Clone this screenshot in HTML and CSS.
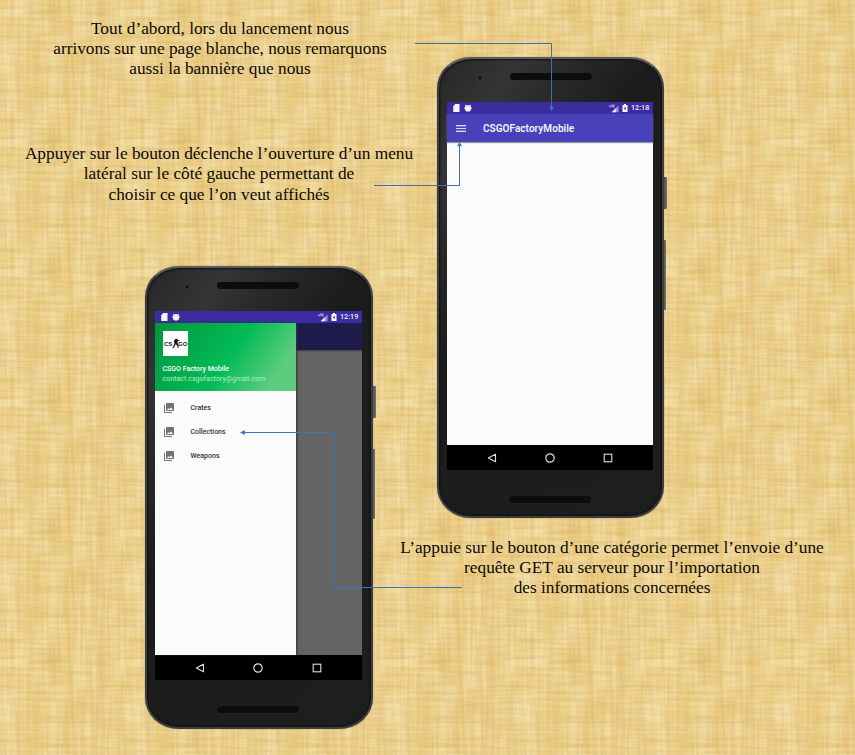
FILE: index.html
```html
<!DOCTYPE html>
<html lang="fr">
<head>
<meta charset="utf-8">
<title>CSGO Factory Mobile</title>
<link rel="stylesheet" href="styles.css">
</head>
<body>
<svg class="defs" width="0" height="0" aria-hidden="true">
  <symbol id="sd" viewBox="0 0 7 8"><path d="M2.3 0H6.5V8H.2V2.2z" fill="#f4f3fc"/></symbol>
  <symbol id="debug" viewBox="0 0 8 8"><path d="M1.200 .5 2.300 1.200H5.700L6.800 .5 6.600 2.200Q7.200 2.500 7 3.500H7.600V5H7Q6.900 7.300 5.500 7.500H2.500Q1.100 7.300 1 5H.4V3.500H1Q.8 2.500 1.400 2.200z" fill="#f4f3fc"/><circle cx="2.8" cy="3" r=".4" fill="#8a82cf"/><circle cx="5.2" cy="3" r=".4" fill="#8a82cf"/></symbol>
  <symbol id="signal" viewBox="0 0 10 9"><path d="M2.5 8.200 9.500 1.500V8.200z" fill="#9b94dc"/><path d="M2.800 8.200 6.800 4.200V8.200z" fill="#f4f3fc"/><path d="M.8 1V2.900H1.900M2.100 1.100H4M3 1.100V3.300M5.700 1.100H4.400V3.100H5.700" stroke="#e6e3fa" stroke-width=".7" fill="none"/></symbol>
  <symbol id="battery" viewBox="0 0 6 8"><path d="M2 0H4V1H5.5V8H.5V1H2z" fill="#fff"/><path d="M3.4 2 1.8 4.7H2.8V6.7L4.3 4H3.4z" fill="#3c2fa0"/></symbol>
  <symbol id="gallery" viewBox="0 0 24 24"><path d="M22 16V4c0-1.100-.9-2-2-2H8c-1.100 0-2 .9-2 2v12c0 1.100.9 2 2 2h12c1.100 0 2-.9 2-2zm-11-4 2.030 2.710L16 11l4 5H8l3-4zM2 6v14c0 1.100.9 2 2 2h14v-2H4V6H2z" fill="#727272"/></symbol>
  <symbol id="back" viewBox="0 0 10 10"><path d="M8.500 1.200V8.800L1.300 5z" fill="none" stroke="#dedede" stroke-width="1.100" stroke-linejoin="round"/></symbol>
  <symbol id="home" viewBox="0 0 10 10"><circle cx="5" cy="5" r="4.200" fill="none" stroke="#dedede" stroke-width="1.200"/></symbol>
  <symbol id="recent" viewBox="0 0 10 10"><rect x="1.200" y="1.200" width="7.600" height="7.600" fill="none" stroke="#dedede" stroke-width="1.100"/></symbol>
</svg>
<main class="slide">
  <svg class="papyrus" width="855" height="755" aria-hidden="true">
    <defs>
      <filter id="weft" x="0" y="0" width="100%" height="100%" color-interpolation-filters="sRGB">
        <feTurbulence type="fractalNoise" baseFrequency=".0231 .3" numOctaves="2" seed="7" stitchTiles="stitch"/>
        <feColorMatrix values="0 0 0 0 .78  0 0 0 0 .62  0 0 0 0 .3  .6 0 0 0 -.2"/>
      </filter>
      <filter id="warp" x="0" y="0" width="100%" height="100%" color-interpolation-filters="sRGB">
        <feTurbulence type="fractalNoise" baseFrequency=".3 .0154" numOctaves="2" seed="12" stitchTiles="stitch"/>
        <feColorMatrix values="0 0 0 0 .82  0 0 0 0 .62  0 0 0 0 .36  .6 0 0 0 -.2"/>
      </filter>
      <filter id="cloud" x="0" y="0" width="100%" height="100%" color-interpolation-filters="sRGB">
        <feTurbulence type="fractalNoise" baseFrequency=".0385 .0385" numOctaves="2" seed="4" stitchTiles="stitch"/>
        <feColorMatrix values="0 0 0 0 .92  0 0 0 0 .79  0 0 0 0 .44  1 0 0 0 -.18"/>
      </filter>
      <pattern id="tile" x="74" y="48" width="130" height="130" patternUnits="userSpaceOnUse">
        <rect width="130" height="130" fill="#f5e3ae"/>
        <rect width="130" height="130" filter="url(#cloud)"/>
        <rect width="130" height="130" filter="url(#weft)"/>
        <rect width="130" height="130" filter="url(#warp)"/>
        <rect x="22" width="9" height="130" fill="#d8a765" opacity=".16"/>
        <rect x="120" width="10" height="130" fill="#dba94a" opacity=".14"/>
      </pattern>
    </defs>
    <rect width="855" height="755" fill="url(#tile)"/>
  </svg>

  <p class="caption launch"><span>Tout d’abord, lors du lancement nous</span><span>arrivons sur une page blanche, nous remarquons</span><span>aussi la bannière que nous</span></p>
  <p class="caption drawer-note"><span>Appuyer sur le bouton déclenche l’ouverture d’un menu</span><span>latéral sur le côté gauche permettant de</span><span>choisir ce que l’on veut affichés</span></p>
  <p class="caption request"><span>L’appuie sur le bouton d’une catégorie permet l’envoie d’une</span><span>requête GET au serveur pour l’importation</span><span>des informations concernées</span></p>

  <section class="phone phone-home">
    <i class="key power"></i><i class="key volume"></i>
    <div class="shell">
      <div class="top"><i class="camera"></i><i class="speaker"></i></div>
      <div class="screen">
        <div class="status"><svg class="sd"><use href="#sd"/></svg><svg class="debug"><use href="#debug"/></svg><svg class="signal"><use href="#signal"/></svg><svg class="battery"><use href="#battery"/></svg><time>12:18</time></div>
        <header class="appbar"><i class="burger"></i><h1>CSGOFactoryMobile</h1></header>
        <div class="content"></div>
        <nav class="softkeys"><svg><use href="#back"/></svg><svg><use href="#home"/></svg><svg><use href="#recent"/></svg></nav>
      </div>
      <div class="bottom"><i class="speaker"></i></div>
    </div>
  </section>

  <section class="phone phone-menu">
    <i class="key power"></i><i class="key volume"></i>
    <div class="shell">
      <div class="top"><i class="camera"></i><i class="speaker"></i></div>
      <div class="screen">
        <div class="status"><svg class="sd"><use href="#sd"/></svg><svg class="debug"><use href="#debug"/></svg><svg class="signal"><use href="#signal"/></svg><svg class="battery"><use href="#battery"/></svg><time>12:19</time></div>
        <div class="body">
          <aside class="drawer">
            <header class="account">
              <svg class="logo" viewBox="0 0 25 25"><rect width="25" height="25" fill="#fff"/><text x=".9" y="15.300" textLength="8.500" lengthAdjust="spacingAndGlyphs">CS</text><text x="15" y="15.300" textLength="9.300" lengthAdjust="spacingAndGlyphs">GO</text><path d="M12.500 7.800h1.800l.3 1.300 2.200-.2v.7l-2 .5-.3 2.500.9 1.400.4 2.700h-1l-.8-2.400-1.400-1.100-.8 1.800-1.300 2.300h-1l1.500-3 .5-2.500-.7-1.200.8-1.500z" fill="#181818"/><path d="M9.700 16.800 12 12.500" stroke="#333" stroke-width=".7"/></svg>
              <strong>CSGO Factory Mobile</strong>
              <span>contact.csgofactory@gmail.com</span>
            </header>
            <ul class="menu">
              <li><svg><use href="#gallery"/></svg>Crates</li>
              <li><svg><use href="#gallery"/></svg>Collections</li>
              <li><svg><use href="#gallery"/></svg>Weapons</li>
            </ul>
          </aside>
          <div class="dimmed"></div>
        </div>
        <nav class="softkeys"><svg><use href="#back"/></svg><svg><use href="#home"/></svg><svg><use href="#recent"/></svg></nav>
      </div>
      <div class="bottom"><i class="speaker"></i></div>
    </div>
  </section>

  <svg class="connectors" width="855" height="755" aria-hidden="true">
    <g fill="none">
      <path d="M415 43.500H551.500V108" stroke="#416fa6"/>
      <path d="M374 185.500H459.500V146" stroke="#416fa6"/>
      <path d="M462 587.500H334.500V432.500H244" stroke="#3c73bb"/>
    </g>
    <path d="M549.200 106.800h4.600L551.500 111z" fill="#3c78be"/>
    <path d="M457 146.300h5L459.500 142z" fill="#3c78be"/>
    <path d="M244.800 430v5L240 432.500z" fill="#3c73bb"/>
  </svg>
</main>
</body>
</html>
```
FILE: styles.css
```css
* { box-sizing: border-box; }
body { margin: 0; }
i { display: block; }
svg { display: block; }
.defs { position: absolute; }
.slide { position: relative; width: 855px; height: 755px; overflow: hidden; background: #ead08c; }
.papyrus, .connectors { position: absolute; inset: 0; }
.connectors { z-index: 3; }

.caption { position: absolute; margin: 0; display: flex; flex-direction: column; align-items: center; font: 17.300px/20.200px "Liberation Serif", "Times New Roman", serif; color: #0b0a06; white-space: nowrap; }
.launch { left: 20px; top: 19px; width: 400px; }
.drawer-note { left: 19px; top: 144px; width: 400px; line-height: 20.400px; }
.request { left: 392px; top: 538px; width: 440px; }

.phone { position: absolute; font-family: Roboto, sans-serif; }
.phone-home { left: 437px; top: 57px; width: 227px; height: 461px; }
.phone-menu { left: 145px; top: 266px; width: 228px; height: 463px; }
.key { position: absolute; right: -2.500px; width: 5px; background: linear-gradient(90deg, #333, #77736c); border-radius: 1px; }
.power { top: 120px; height: 32px; }
.volume { top: 183px; height: 70px; right: -1.500px; }
.shell { position: relative; height: 100%; display: flex; flex-direction: column; padding: 0 9px 0 8px; border: 2px solid #3e3e40; border-top-color: #5c5c5c; border-radius: 34px / 31px; background: linear-gradient(125deg, #262626 0, #353535 15%, #2b2b2b 23%, #1c1c1c 40%, #1e1e1e 100%); box-shadow: inset 0 0 2px 1px #111, 0 0 1px #555; }
.top { flex: 0 0 43px; display: flex; align-items: flex-start; padding: 14px 0 0 29px; }
.phone-home .top { padding-left: 30px; }
.phone-menu .shell { padding-left: 7.500px; }
.camera { width: 6px; height: 6px; margin-top: 2px; border: 1px solid #453f40; border-radius: 50%; background: #171116; }
.speaker { width: 82px; height: 7px; border-radius: 4px; background: radial-gradient(circle, #080808 .6px, #1a1a1a 1px) 0 0 / 2px 2px; box-shadow: 0 0 1px #3a3a3a; }
.top .speaker { margin-left: 27px; }
.screen { flex: 1; min-height: 0; display: flex; flex-direction: column; }
.bottom { flex: 0 0 46px; display: flex; justify-content: center; padding-top: 26px; }
.phone-menu .bottom { flex-basis: 47px; }

.status { flex: 0 0 12px; display: flex; align-items: center; padding: 0 4px 0 6px; background: #3b2d9f; color: #efedfb; }
.sd { width: 7px; height: 8px; }
.debug { width: 8px; height: 8px; margin-left: 4px; }
.signal { width: 10px; height: 9px; margin-left: auto; }
.battery { width: 6px; height: 8px; margin: 0 3px 0 3px; }
.status time { font-size: 7.200px; line-height: 12px; font-weight: 500; width: 18px; }
.appbar { flex: 0 0 28px; display: flex; align-items: center; padding-left: 9px; background: #4841b9; color: #f3f2fb; box-shadow: 0 1px 1px #999; z-index: 1; }
.burger { width: 10px; height: 7px; background: linear-gradient(#dddaf7 0 1px, #7f79d0 1px 2px, transparent 2px 3px, #dddaf7 3px 4px, transparent 4px 5px, #7f79d0 5px 6px, #dddaf7 6px); }
.appbar h1 { margin: 1px 0 0 17px; font-size: 10px; line-height: 14px; font-weight: 600; letter-spacing: .05px; }
.content { flex: 1; background: #fbfbfb; }
.softkeys { flex: 0 0 25px; display: flex; justify-content: space-between; align-items: center; padding: 0 40px; background: #000; }
.softkeys svg { width: 10px; height: 10px; }

.body { flex: 1; display: flex; min-height: 0; }
.drawer { flex: 0 0 141px; background: #fbfbfb; display: flex; flex-direction: column; z-index: 1; box-shadow: 1px 0 2px #333; }
.account { flex: 0 0 68px; display: flex; flex-direction: column; padding: 8px 8px 0; background: linear-gradient(125deg, #03953e 0, #02bb55 52%, #5dcc7f 84%, #5dcc7f 100%); color: #fff; font-size: 7px; line-height: 10px; white-space: nowrap; }
.logo { width: 25px; height: 25px; margin-bottom: 8px; flex: none; }
.logo text { font: bold 5px "Liberation Sans", sans-serif; fill: #222; }
.account strong { font-weight: 500; }
.account span { color: #b9edca; letter-spacing: .04px; }
.menu { list-style: none; margin: 0; padding: 5px 0 0 8px; }
.menu li { height: 24px; display: flex; align-items: center; font-size: 7px; font-weight: 500; color: #333; }
.menu svg { width: 12px; height: 12px; margin-right: 16px; }
.dimmed { flex: 1; background: linear-gradient(#1e1a4b 0 27px, #4b4b4b 27px 28px, #646464 29px); }
```
